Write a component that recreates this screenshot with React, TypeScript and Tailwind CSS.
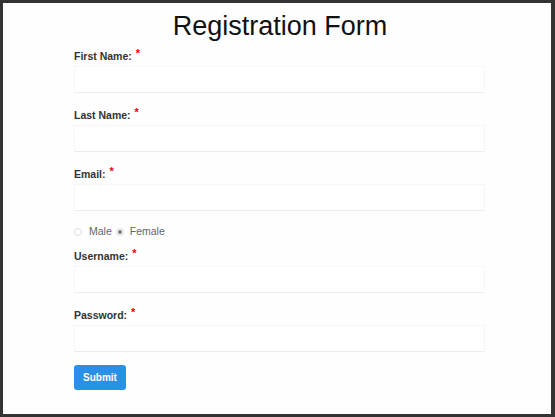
import React from "react";

function Field({ label }: { label: string }) {
  return (
    <div className="flex flex-col">
      <label className="h-[14px] leading-[14px] text-[10.5px] font-bold text-[#333] mb-[3px] flex items-start">
        <span>{label}</span>
        <span className="text-[#e00] text-[11px] leading-[11px] ml-[4px] -mt-[1px]">*</span>
      </label>
      <div className="h-[27px] w-[411px] border border-[#f6f6f6] border-b-[#ededed] bg-white" />
    </div>
  );
}

export default function App() {
  return (
    <div
      className="w-[555px] h-[417px] bg-[#333] pt-[3px] pl-[3px] pr-[4px] pb-[3px]"
      style={{ fontFamily: '"Liberation Sans", Arial, sans-serif' }}
    >
      <div className="w-full h-full bg-[#fefefe] flex flex-col">
        <h1 className="mt-[7px] text-[27px] leading-[32px] text-[#111] text-center pl-[6px]">
          Registration Form
        </h1>
        <div className="pl-[71px] mt-[7px] flex flex-col">
          <div className="flex flex-col gap-[15px]">
            <Field label="First Name:" />
            <Field label="Last Name:" />
            <Field label="Email:" />
          </div>
          <div className="mt-[15px] h-[12px] flex items-center text-[10.5px] text-[#666]">
            <span className="w-[8px] h-[8px] rounded-full border border-[#ddd] bg-white" />
            <span className="ml-[7px]">Male</span>
            <span className="ml-[4px] w-[8px] h-[8px] rounded-full border border-[#ddd] bg-white flex items-center justify-center">
              <span className="w-[4px] h-[4px] rounded-full bg-[#777]" />
            </span>
            <span className="ml-[6px]">Female</span>
          </div>
          <div className="mt-[11px] flex flex-col gap-[15px]">
            <Field label="Username:" />
            <Field label="Password:" />
          </div>
          <button className="mt-[13px] w-[52px] h-[25px] rounded-[3px] bg-[#2a8fe6] text-white text-[10px] font-bold flex items-center justify-center">
            Submit
          </button>
        </div>
      </div>
    </div>
  );
}
